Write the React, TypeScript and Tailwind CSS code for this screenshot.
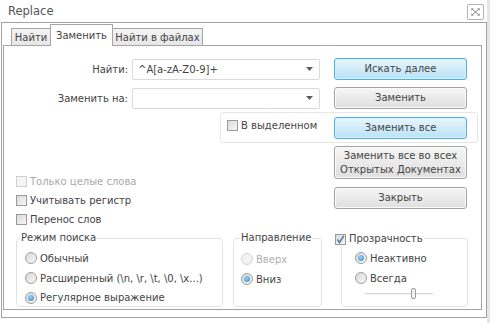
import React from "react";

const font = "font-['DejaVu_Sans',sans-serif]";

function Check({ checked = false, disabled = false }: { checked?: boolean; disabled?: boolean }) {
  return (
    <span
      className={`relative inline-block w-[11px] h-[11px] shrink-0 border ${
        disabled ? "border-[#cfcfcf] bg-[#f5f5f5]" : "border-[#9a9a9a] bg-gradient-to-br from-[#dadada] to-[#f7f7f7]"
      }`}
    >
      {checked && (
        <svg viewBox="0 0 11 11" className="absolute left-[-1px] top-[-1px] w-[11px] h-[11px]">
          <path d="M2.5 5.5 L4.5 8.5 L8.8 1.8" fill="none" stroke="#5b7fa6" strokeWidth="1.6" />
        </svg>
      )}
    </span>
  );
}

function Radio({ on = false, disabled = false }: { on?: boolean; disabled?: boolean }) {
  return (
    <span
      className={`relative inline-flex items-center justify-center w-[12px] h-[12px] shrink-0 rounded-full border ${
        disabled ? "border-[#d2d2d2] bg-[#f3f3f3]" : "border-[#9d9d9d] bg-gradient-to-br from-[#d9d9d9] to-[#f8f8f8]"
      }`}
    >
      {on && <span className="w-[6px] h-[6px] rounded-full bg-[radial-gradient(circle_at_40%_35%,#9ad4f5,#2d86c6)]" />}
    </span>
  );
}

function Btn({ label, blue = false, h = "h-[22px]" }: { label: React.ReactNode; blue?: boolean; h?: string }) {
  return (
    <div
      className={`w-[133px] ${h} flex items-center justify-center text-center leading-[14px] rounded-[3px] border ${
        blue
          ? "border-[#4fb0e6] bg-gradient-to-b from-[#e8f6fd] to-[#b9e2f7] shadow-[inset_0_0_0_1px_#d6f0fc]"
          : "border-[#a3a3a3] bg-gradient-to-b from-[#f6f6f6] to-[#dfdfdf] shadow-[inset_0_0_0_1px_#fbfbfb]"
      }`}
    >
      {label}
    </div>
  );
}

function Combo({ value }: { value?: string }) {
  return (
    <div className="w-[188px] h-[21px] ml-[4px] flex items-center border border-[#dadada] rounded-[2px] bg-white pl-[5px] pr-[6px]">
      <span className="flex-1">{value}</span>
      <svg viewBox="0 0 7 4" className="w-[7px] h-[4px]">
        <path d="M0 0 H7 L3.5 4 Z" fill="#5c5c5c" />
      </svg>
    </div>
  );
}

export default function App() {
  return (
    <div className={`w-[496px] h-[323px] bg-white text-[#444] text-[10px] ${font} overflow-hidden`}>
      <div className="w-[490px] h-[323px] border-r-[3px] border-[#e6e6e6]">
        <div className="h-[22px] flex items-start">
          <span className="ml-[8px] mt-[3px] text-[11.5px] text-[#555]">Replace</span>
          <div className="ml-auto mr-[3px] mt-[4px] w-[17px] h-[16px] border border-[#b3b3b3] rounded-[2px] flex items-center justify-center">
            <svg viewBox="0 0 9 8" className="w-[9px] h-[8px]">
              <path d="M1 1 L8 7 M8 1 L1 7" stroke="#8a8a8a" strokeWidth="1" />
              <path d="M0.5 0.5 h2 M0.5 0.5 v2 M8.5 0.5 h-2 M8.5 0.5 v2 M0.5 7.5 h2 M0.5 7.5 v-2 M8.5 7.5 h-2 M8.5 7.5 v-2" stroke="#b0b0b0" strokeWidth="1" />
            </svg>
          </div>
        </div>
        <div className="ml-[1px] w-[486px] h-[296px] border border-[#a3a3a3] pl-[1px] pr-[4px] pt-[1px]">
          {/* tabs */}
          <div className="flex items-end h-[21px] pl-[8px] relative z-10">
            <div className="w-[40px] h-[17px] border border-b-0 border-[#a6a6a6] bg-gradient-to-b from-[#f4f4f4] to-[#e6e6e6] flex items-center justify-center pt-[1px]">
              Найти
            </div>
            <div className="w-[63px] h-[21px] border border-b-0 border-[#a6a6a6] bg-white flex items-start justify-center pt-[3px] -ml-px relative">
              Заменить
              <span className="absolute left-0 right-0 -bottom-px h-px bg-white" />
            </div>
            <div className="w-[91px] h-[17px] border border-b-0 border-[#a6a6a6] bg-gradient-to-b from-[#f4f4f4] to-[#e6e6e6] flex items-center justify-center pt-[1px] -ml-px">
              Найти в файлах
            </div>
          </div>
          <div className="w-[479px] h-[265px] border border-[#a3a3a3] bg-white">
            <div className="flex items-center h-[22px] mt-[12px]">
              <div className="w-[124px] text-right">Найти:</div>
              <Combo value="^A[a-zA-Z0-9]+" />
              <div className="ml-[14px]">
                <Btn label="Искать далее" blue />
              </div>
            </div>
            <div className="flex items-center h-[22px] mt-[7px]">
              <div className="w-[124px] text-right">Заменить на:</div>
              <Combo />
              <div className="ml-[14px]">
                <Btn label="Заменить" />
              </div>
            </div>
            <div className="ml-[216px] mt-[3px] w-[258px] h-[31px] border border-[#e7e7e7] rounded-[3px] flex items-start justify-between pl-[6px] pr-[10px]">
              <div className="flex items-center gap-[3px] mt-[7px] h-[11px]">
                <Check />
                <span>В выделенном</span>
              </div>
              <div className="mt-[4px]">
                <Btn label="Заменить все" blue />
              </div>
            </div>
            <div className="flex h-[86px]">
              <div className="w-[330px] pl-[12px] pt-[29px]">
                <div className="h-[19px] flex items-center gap-[3px] text-[#a9a9a9]">
                  <Check disabled />
                  <span>Только целые слова</span>
                </div>
                <div className="h-[19px] flex items-center gap-[3px]">
                  <Check />
                  <span>Учитывать регистр</span>
                </div>
                <div className="h-[19px] flex items-center gap-[3px]">
                  <Check />
                  <span>Перенос слов</span>
                </div>
              </div>
              <div className="pt-[3px]">
                <Btn
                  h="h-[33px]"
                  label={
                    <span>
                      Заменить все во всех
                      <br />
                      Открытых Документах
                    </span>
                  }
                />
                <div className="mt-[8px]">
                  <Btn label="Закрыть" />
                </div>
              </div>
            </div>
            <div className="flex mt-[9px]">
              <div className="relative ml-[12px] w-[207px] h-[69px] border border-[#e2e2e2] rounded-[4px] pt-[9px] pl-[8px]">
                <span className="absolute left-[3px] top-[-8px] px-[1px] bg-white leading-[14px]">Режим поиска</span>
                <div className="h-[20px] flex items-center gap-[3px]">
                  <Radio />
                  <span>Обычный</span>
                </div>
                <div className="h-[20px] flex items-center gap-[3px]">
                  <Radio />
                  <span>Расширенный (\n, \r, \t, \0, \x...)</span>
                </div>
                <div className="h-[19px] flex items-center gap-[3px]">
                  <Radio on />
                  <span>Регулярное выражение</span>
                </div>
              </div>
              <div className="relative ml-[10px] w-[89px] h-[69px] border border-[#e2e2e2] rounded-[4px] pt-[10px] pl-[7px]">
                <span className="absolute left-[6px] top-[-8px] px-[1px] bg-white leading-[14px]">Направление</span>
                <div className="h-[20px] flex items-center gap-[3px] text-[#b0b0b0]">
                  <Radio disabled />
                  <span>Вверх</span>
                </div>
                <div className="h-[20px] flex items-center gap-[3px]">
                  <Radio on />
                  <span>Вниз</span>
                </div>
              </div>
              <div className="relative ml-[19px] w-[127px] h-[69px] border border-[#e2e2e2] rounded-[4px] pt-[9px] pl-[13px]">
                <span className="absolute left-[-7px] top-[-7px] pr-[2px] bg-white leading-[14px] flex items-center gap-[3px]">
                  <Check checked />
                  <span>Прозрачность</span>
                </span>
                <div className="h-[20px] flex items-center gap-[3px]">
                  <Radio on />
                  <span>Неактивно</span>
                </div>
                <div className="h-[20px] flex items-center gap-[3px]">
                  <Radio />
                  <span>Всегда</span>
                </div>
                <div className="relative ml-[10px] mt-[5px] w-[68px] h-[2px] bg-[#d8d8d8] border-b border-[#f4f4f4]">
                  <span className="absolute left-[46px] top-[-5px] w-[5px] h-[11px] rounded-[2px] border border-[#9c9c9c] bg-[#f1f1f1]" />
                </div>
              </div>
            </div>
          </div>
        </div>
      </div>
    </div>
  );
}
